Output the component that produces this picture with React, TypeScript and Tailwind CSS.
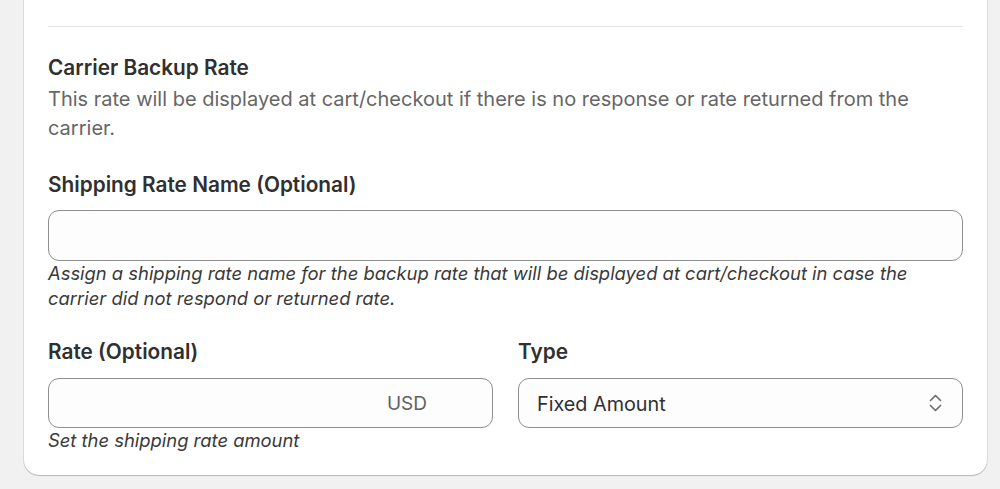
import React from "react";

export default function App() {
  return (
    <div
      className="min-h-screen bg-[#f1f1f1] pl-6 pr-[13px]"
      style={{ fontFamily: "Inter, 'Noto Sans', sans-serif" }}
    >
      <div className="bg-white rounded-b-[15px] shadow-[0_1px_1px_rgba(0,0,0,0.18),0_0_0_1px_rgba(0,0,0,0.07)] px-6 pt-[26px] pb-[22px]">
        <div className="h-px bg-[#e6e6e6]" />
        <h2 className="mt-[29px] text-[20.8px] leading-[24px] font-semibold text-[#303030]">
          Carrier Backup Rate
        </h2>
        <p className="mt-[5px] text-[20px] leading-[29px] text-[#666666]">
          This rate will be displayed at cart/checkout if there is no response or rate returned from the carrier.
        </p>
        <label className="block mt-[30px] text-[20.8px] leading-[24px] font-semibold text-[#303030]">
          Shipping Rate Name (Optional)
        </label>
        <div className="mt-[13px] h-[51px] rounded-[11px] border border-[#8f8f8f] bg-[#fdfdfd]" />
        <p className="text-[18.4px] leading-[25px] italic text-[#3a3a3a]">
          Assign a shipping rate name for the backup rate that will be displayed at cart/checkout in case the carrier did not respond or returned rate.
        </p>
        <div className="mt-[29px] grid grid-cols-2 gap-x-[25px]">
          <div>
            <label className="block text-[20.8px] leading-[24px] font-semibold text-[#303030]">
              Rate (Optional)
            </label>
            <div className="mt-[14px] h-[50px] rounded-[11px] border border-[#8f8f8f] bg-[#fdfdfd] flex items-center justify-end pr-[65px] pt-[3px]">
              <span className="text-[19px] text-[#616161]">USD</span>
            </div>
            <p className="text-[18.4px] leading-[25px] italic text-[#3a3a3a]">
              Set the shipping rate amount
            </p>
          </div>
          <div>
            <label className="block text-[20.8px] leading-[24px] font-semibold text-[#303030]">
              Type
            </label>
            <div className="mt-[14px] h-[50px] rounded-[11px] border border-[#8f8f8f] bg-[#fdfdfd] flex items-center justify-between pl-[18px] pr-[19px]">
              <span className="text-[19.8px] text-[#303030] pt-[3px]">Fixed Amount</span>
              <svg width="15" height="20" viewBox="0 0 15 20" fill="none" stroke="#707070" strokeWidth="1.7" strokeLinecap="round" strokeLinejoin="round">
                <path d="M2.5 7.5 L7.5 2.5 L12.5 7.5" />
                <path d="M2.5 12.5 L7.5 17.5 L12.5 12.5" />
              </svg>
            </div>
          </div>
        </div>
      </div>
    </div>
  );
}
